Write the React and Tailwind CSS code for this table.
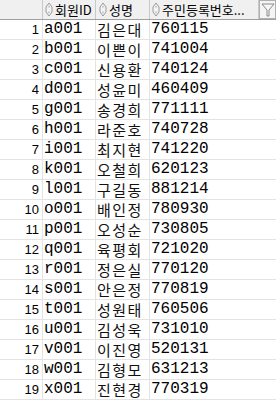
import React from "react";

const rows = [
  ["a001", "김은대", "760115"],
  ["b001", "이쁜이", "741004"],
  ["c001", "신용환", "740124"],
  ["d001", "성윤미", "460409"],
  ["g001", "송경희", "771111"],
  ["h001", "라준호", "740728"],
  ["i001", "최지현", "741220"],
  ["k001", "오철희", "620123"],
  ["l001", "구길동", "881214"],
  ["o001", "배인정", "780930"],
  ["p001", "오성순", "730805"],
  ["q001", "육평회", "721020"],
  ["r001", "정은실", "770120"],
  ["s001", "안은정", "770819"],
  ["t001", "성원태", "760506"],
  ["u001", "김성욱", "731010"],
  ["v001", "이진영", "520131"],
  ["w001", "김형모", "631213"],
  ["x001", "진현경", "770319"],
];

function SortIcon() {
  return (
    <svg width="8" height="15" viewBox="0 0 8 15" className="shrink-0">
      <path d="M4 1 L7 5 L7 10 L4 14 L1 10 L1 5 Z" fill="#f4f4f4" stroke="#9a9a9a" strokeWidth="1" />
      <path d="M4 3 L5.5 5.5 L2.5 5.5 Z" fill="#c8c8c8" />
      <path d="M4 12 L5.5 9.5 L2.5 9.5 Z" fill="#c8c8c8" />
    </svg>
  );
}

function FilterIcon() {
  return (
    <svg width="14" height="16" viewBox="0 0 14 16">
      <path d="M1 2 L13 2 L8 8 L8 14 L6 14 L6 8 Z" fill="#f7f7f7" stroke="#8a8a8a" strokeWidth="1" />
    </svg>
  );
}

export default function App() {
  const ko = { fontFamily: '"Noto Sans CJK KR", "Noto Sans", sans-serif' };
  return (
    <div className="w-[276px] h-[404px] bg-white overflow-hidden select-none">
      <div className="flex h-[20px] bg-[#f0f0f0] border-b border-[#a0a0a0] text-[13px] text-black" style={ko}>
        <div className="w-[43px] border-r border-[#c8c8c8]" />
        <div className="w-[53px] flex items-center gap-[2px] pl-[2px] border-r border-[#c8c8c8] leading-none">
          <SortIcon />
          <span className="whitespace-nowrap">회원ID</span>
        </div>
        <div className="w-[54px] flex items-center gap-[2px] pl-[3px] border-r border-[#c8c8c8] leading-none">
          <SortIcon />
          <span className="whitespace-nowrap">성명</span>
        </div>
        <div className="w-[109px] flex items-center gap-[2px] pl-[2px] border-r border-[#c8c8c8] leading-none">
          <SortIcon />
          <span className="whitespace-nowrap">주민등록번호...</span>
        </div>
        <div className="flex-1 flex items-center justify-center border border-[#b0b0b0] bg-[#f4f4f4]">
          <FilterIcon />
        </div>
      </div>
      {rows.map((r, i) => (
        <div key={i} className="flex h-[20px] border-b border-[#e3e3e3]">
          <div
            className="w-[43px] shrink-0 border-r border-[#e3e3e3] text-right pr-[3px] text-[13px] leading-[19px] text-black"
            style={{ fontFamily: '"Liberation Sans", Arial, sans-serif' }}
          >
            {i + 1}
          </div>
          <div
            className="w-[53px] shrink-0 whitespace-nowrap border-r border-[#e3e3e3] pl-[1px] text-[16px] leading-[19px] text-black"
            style={{ fontFamily: '"Liberation Mono", monospace' }}
          >
            {r[0]}
          </div>
          <div
            className="w-[54px] shrink-0 whitespace-nowrap border-r border-[#e3e3e3] pl-[1px] text-[15px] leading-[19px] tracking-[1.5px] text-[#111]"
            style={ko}
          >
            {r[1]}
          </div>
          <div
            className="flex-1 pl-[1px] text-[16px] leading-[19px] text-black"
            style={{ fontFamily: '"Liberation Mono", monospace' }}
          >
            {r[2]}
          </div>
        </div>
      ))}
    </div>
  );
}
